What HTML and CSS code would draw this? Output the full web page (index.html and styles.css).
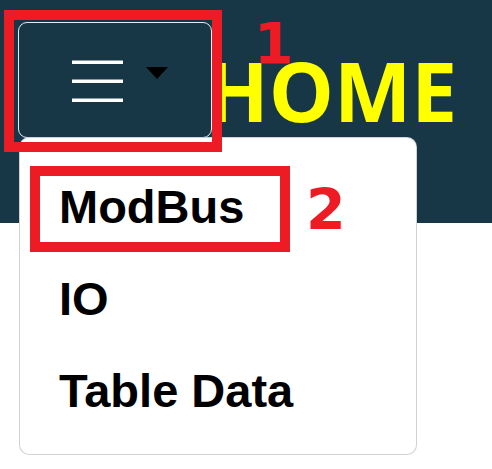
FILE: index.html
```html
<!DOCTYPE html>
<html>
<head>
<meta charset="utf-8">
<link rel="stylesheet" href="styles.css">
</head>
<body>
<header class="navbar">
  <button class="toggler" type="button">
    <svg class="burger" width="51" height="44" viewBox="0 0 51 44">
      <rect x="0" y="0.5" width="51" height="3.5" fill="#fff"/>
      <rect x="0" y="19.5" width="51" height="3.5" fill="#fff"/>
      <rect x="0" y="38.5" width="51" height="3.5" fill="#fff"/>
    </svg>
    <span class="caret"></span>
  </button>
  <h1 class="brand">HOME</h1>
</header>
<ul class="menu">
  <li class="item">ModBus</li>
  <li class="item">IO</li>
  <li class="item">Table Data</li>
</ul>
<div class="mark mark-1"></div>
<div class="mark mark-2"></div>
<span class="num num-1">1</span>
<span class="num num-2">2</span>
</body>
</html>
```
FILE: styles.css
```css
html, body {
  margin: 0;
  padding: 0;
  background: #fff;
}
body {
  position: relative;
  width: 492px;
  height: 469px;
  overflow: hidden;
  font-family: "Open Sans", "Noto Sans", sans-serif;
}
.navbar {
  display: flex;
  align-items: flex-start;
  height: 223px;
  box-sizing: border-box;
  padding: 22px 0 0 18px;
  background: #173746;
}
.toggler {
  display: flex;
  align-items: flex-start;
  box-sizing: border-box;
  width: 194px;
  height: 116px;
  margin: 0;
  padding: 37px 0 0 53px;
  background: transparent;
  border: 1.5px solid #e6ecee;
  border-radius: 9px;
}
.burger {
  display: block;
}
.caret {
  display: block;
  width: 0;
  height: 0;
  margin: 7px 0 0 23px;
  border-top: 12px solid #000;
  border-left: 11.5px solid transparent;
  border-right: 11.5px solid transparent;
}
.brand {
  margin: 27px 0 0 -6px;
  font-size: 82px;
  line-height: 1;
  font-weight: 700;
  color: #ffff00;
  letter-spacing: 0;
}
.menu {
  position: absolute;
  left: 19px;
  top: 137px;
  width: 398px;
  box-sizing: border-box;
  margin: 0;
  padding: 23px 0 17px;
  list-style: none;
  background: #fff;
  border: 1px solid rgba(0, 0, 0, 0.18);
  border-radius: 10px;
}
.item {
  padding-left: 39px;
  height: 92px;
  line-height: 92px;
  font-family: "Liberation Sans", Arial, sans-serif;
  font-size: 47px;
  font-weight: 700;
  color: #000;
}
.mark {
  position: absolute;
  border: 10px solid #ed1c24;
  box-sizing: border-box;
}
.mark-1 {
  left: 4px;
  top: 10px;
  width: 218px;
  height: 142px;
}
.mark-2 {
  left: 30px;
  top: 166px;
  width: 260px;
  height: 86px;
}
.num {
  position: absolute;
  font-family: "DejaVu Sans", sans-serif;
  font-weight: 700;
  font-size: 57px;
  line-height: 1;
  color: #ed1c24;
}
.num-1 {
  left: 254px;
  top: 16px;
}
.num-2 {
  left: 306px;
  top: 182px;
}
```
